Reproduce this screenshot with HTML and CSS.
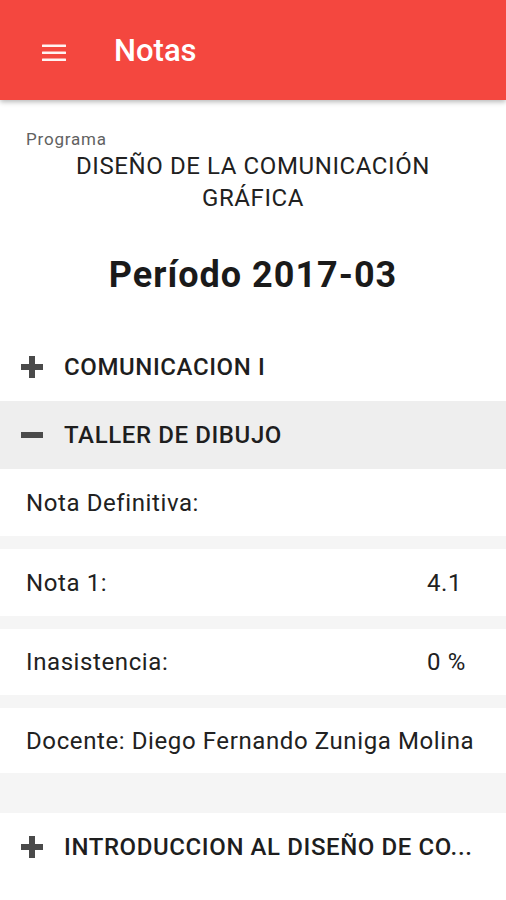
FILE: index.html
```html
<!DOCTYPE html>
<html lang="es">
<head>
<meta charset="utf-8">
<title>Notas</title>
<link rel="stylesheet" href="styles.css">
</head>
<body>
<header class="appbar">
  <svg class="menu-icon" width="24" height="18" viewBox="0 0 24 18" aria-hidden="true">
    <rect x="0" y="0.5" width="24" height="2.6" rx="0.5"/>
    <rect x="0" y="7.5" width="24" height="2.6" rx="0.5"/>
    <rect x="0" y="14.5" width="24" height="2.6" rx="0.5"/>
  </svg>
  <h1 class="appbar-title">Notas</h1>
</header>

<main class="content">
  <section class="program">
    <div class="program-label">Programa</div>
    <div class="program-name">DISEÑO DE LA COMUNICACIÓN<br>GRÁFICA</div>
    <h2 class="period">Período 2017-03</h2>
  </section>

  <section class="courses">
    <div class="course">
      <svg class="toggle" width="22" height="22" viewBox="0 0 22 22" aria-hidden="true">
        <rect x="0" y="8" width="22" height="6"/>
        <rect x="8" y="0" width="6" height="22"/>
      </svg>
      <span class="course-name">COMUNICACION I</span>
    </div>

    <div class="course course-open">
      <svg class="toggle" width="22" height="22" viewBox="0 0 22 22" aria-hidden="true">
        <rect x="0" y="8" width="22" height="6"/>
      </svg>
      <span class="course-name">TALLER DE DIBUJO</span>
    </div>

    <div class="details">
      <div class="detail-row">
        <span class="detail-label">Nota Definitiva:</span>
        <span class="detail-value"></span>
      </div>
      <div class="detail-row">
        <span class="detail-label">Nota 1:</span>
        <span class="detail-value">4.1</span>
      </div>
      <div class="detail-row row-b">
        <span class="detail-label">Inasistencia:</span>
        <span class="detail-value">0 %</span>
      </div>
      <div class="detail-row row-c">
        <span class="detail-label detail-full">Docente: Diego Fernando Zuniga Molina</span>
      </div>
    </div>

    <div class="course">
      <svg class="toggle" width="22" height="22" viewBox="0 0 22 22" aria-hidden="true">
        <rect x="0" y="8" width="22" height="6"/>
        <rect x="8" y="0" width="6" height="22"/>
      </svg>
      <span class="course-name">INTRODUCCION AL DISEÑO DE CO...</span>
    </div>
  </section>
</main>
</body>
</html>
```

FILE: styles.css
```css
* {
  box-sizing: border-box;
}

html, body {
  margin: 0;
  padding: 0;
  background: #ffffff;
}

body {
  width: 506px;
  height: 900px;
  overflow: hidden;
  font-family: Roboto, "Noto Sans", "Liberation Sans", sans-serif;
  color: #212121;
}

.appbar {
  height: 100px;
  background: #f4473f;
  display: flex;
  align-items: center;
  padding: 0 0 0 42px;
  box-shadow: 0 2px 5px rgba(0, 0, 0, 0.28);
  position: relative;
  z-index: 1;
}

.menu-icon {
  fill: #fff3f2;
  margin-top: 5px;
  flex: none;
}

.appbar-title {
  margin: 0 0 0 48px;
  font-size: 31px;
  font-weight: 500;
  color: #ffffff;
  line-height: 1;
}

.content {
  padding-top: 29px;
}

.program-label {
  padding-left: 26px;
  font-size: 17px;
  line-height: 21px;
  letter-spacing: 0.8px;
  color: #616161;
}

.program-name {
  margin-top: 0;
  text-align: center;
  font-size: 24px;
  line-height: 32px;
  letter-spacing: 0.6px;
  color: #212121;
}

.period {
  margin: 39px 0 0;
  text-align: center;
  font-size: 36px;
  line-height: 44px;
  letter-spacing: 1px;
  font-weight: 700;
  color: #1a1a1a;
}

.courses {
  margin-top: 36px;
}

.course {
  height: 68px;
  display: flex;
  align-items: center;
  padding-left: 21px;
}

.course-open {
  background: #eeeeee;
}

.toggle {
  fill: #4a4a4a;
  flex: none;
}

.course-name {
  margin-left: 21px;
  font-size: 24px;
  letter-spacing: 0.6px;
  font-weight: 500;
  color: #1e1e1e;
  white-space: nowrap;
}

.details {
  display: flex;
  flex-direction: column;
  gap: 13px;
  background: #f5f5f5;
  padding-bottom: 40px;
}

.detail-row {
  height: 67px;
  background: #ffffff;
  display: grid;
  grid-template-columns: 401px 1fr;
  align-items: center;
  padding-left: 26px;
  font-size: 24px;
  letter-spacing: 0.6px;
  color: #212121;
}

.row-b {
  height: 66px;
}

.row-c {
  height: 65px;
}

.detail-full {
  grid-column: 1 / 3;
  white-space: nowrap;
}
```
